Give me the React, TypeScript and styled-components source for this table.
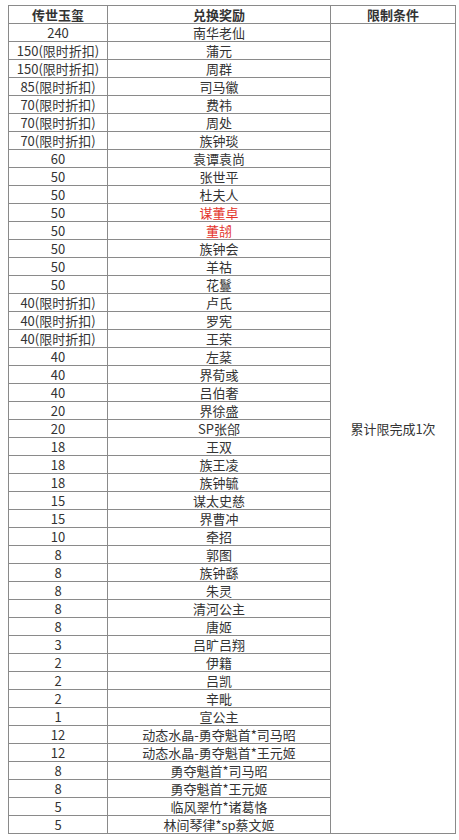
import React from "react";
import styled, { createGlobalStyle } from "styled-components";

const GlobalStyle = createGlobalStyle`
  html, body { margin: 0; padding: 0; background: #ffffff; }
  body { padding: 5px 0 0 8px; font-family: "Noto Sans CJK SC", "Noto Sans", sans-serif; }
`;

const Table = styled.table`
  border-collapse: collapse;
  width: 447px;
  table-layout: fixed;
  color: #333333;
  font-size: 13px;
`;

const Head = styled.th`
  border: 1px solid #8a8a8a;
  height: 17px;
  line-height: 17px;
  padding: 0;
  font-weight: bold;
  text-align: center;
  white-space: nowrap;
`;

const Cell = styled.td<{ $red?: boolean }>`
  border: 1px solid #8a8a8a;
  height: 17px;
  line-height: 17px;
  padding: 0;
  text-align: center;
  white-space: nowrap;
  color: ${(p) => (p.$red ? "#e3332b" : "#333333")};
`;

const NoteCell = styled.td`
  border: 1px solid #8a8a8a;
  padding: 0;
  text-align: center;
  vertical-align: middle;
  color: #333333;
`;

type Row = { cost: string; name: string; red?: boolean };

const rows: Row[] = [
  { cost: "240", name: "南华老仙" },
  { cost: "150(限时折扣)", name: "蒲元" },
  { cost: "150(限时折扣)", name: "周群" },
  { cost: "85(限时折扣)", name: "司马徽" },
  { cost: "70(限时折扣)", name: "费祎" },
  { cost: "70(限时折扣)", name: "周处" },
  { cost: "70(限时折扣)", name: "族钟琰" },
  { cost: "60", name: "袁谭袁尚" },
  { cost: "50", name: "张世平" },
  { cost: "50", name: "杜夫人" },
  { cost: "50", name: "谋董卓", red: true },
  { cost: "50", name: "董翓", red: true },
  { cost: "50", name: "族钟会" },
  { cost: "50", name: "羊祜" },
  { cost: "50", name: "花鬘" },
  { cost: "40(限时折扣)", name: "卢氏" },
  { cost: "40(限时折扣)", name: "罗宪" },
  { cost: "40(限时折扣)", name: "王荣" },
  { cost: "40", name: "左棻" },
  { cost: "40", name: "界荀彧" },
  { cost: "40", name: "吕伯奢" },
  { cost: "20", name: "界徐盛" },
  { cost: "20", name: "SP张郃" },
  { cost: "18", name: "王双" },
  { cost: "18", name: "族王凌" },
  { cost: "18", name: "族钟毓" },
  { cost: "15", name: "谋太史慈" },
  { cost: "15", name: "界曹冲" },
  { cost: "10", name: "牵招" },
  { cost: "8", name: "郭图" },
  { cost: "8", name: "族钟繇" },
  { cost: "8", name: "朱灵" },
  { cost: "8", name: "清河公主" },
  { cost: "8", name: "唐姬" },
  { cost: "3", name: "吕旷吕翔" },
  { cost: "2", name: "伊籍" },
  { cost: "2", name: "吕凯" },
  { cost: "2", name: "辛毗" },
  { cost: "1", name: "宣公主" },
  { cost: "12", name: "动态水晶-勇夺魁首*司马昭" },
  { cost: "12", name: "动态水晶-勇夺魁首*王元姬" },
  { cost: "8", name: "勇夺魁首*司马昭" },
  { cost: "8", name: "勇夺魁首*王元姬" },
  { cost: "5", name: "临风翠竹*诸葛恪" },
  { cost: "5", name: "林间琴律*sp蔡文姬" },
];

export default function App() {
  return (
    <>
      <GlobalStyle />
      <Table>
        <colgroup>
          <col style={{ width: 99 }} />
          <col style={{ width: 223 }} />
          <col style={{ width: 125 }} />
        </colgroup>
        <thead>
          <tr>
            <Head>传世玉玺</Head>
            <Head>兑换奖励</Head>
            <Head>限制条件</Head>
          </tr>
        </thead>
        <tbody>
          {rows.map((r, i) => (
            <tr key={i}>
              <Cell>{r.cost}</Cell>
              <Cell $red={r.red}>{r.name}</Cell>
              {i === 0 && <NoteCell rowSpan={rows.length}>累计限完成1次</NoteCell>}
            </tr>
          ))}
        </tbody>
      </Table>
    </>
  );
}
